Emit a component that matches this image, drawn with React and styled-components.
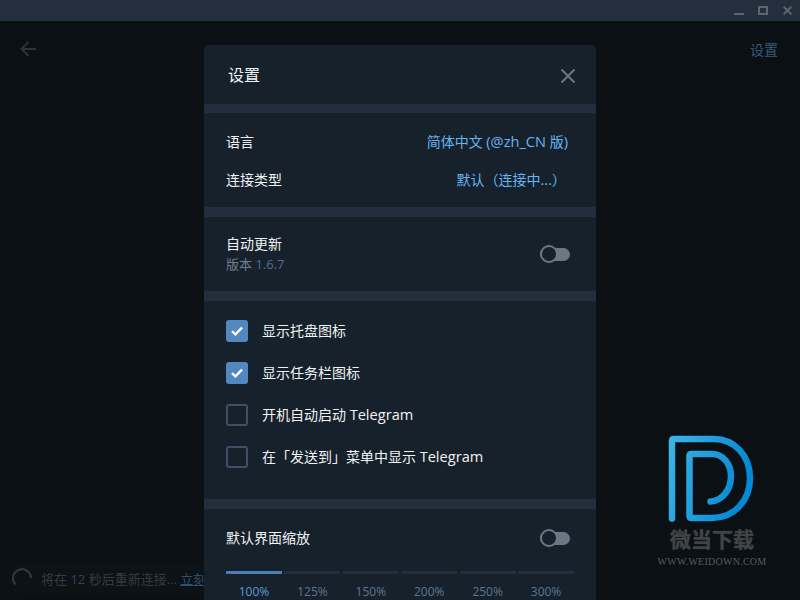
import styled, { createGlobalStyle } from "styled-components";

const GlobalStyle = createGlobalStyle`
  html, body {
    margin: 0;
    padding: 0;
    background: #0b1014;
    font-family: "Open Sans", "Noto Sans CJK SC", sans-serif;
    font-size: 14px;
  }
  *, *::before { box-sizing: border-box; }
`;

const scales = ["100%", "125%", "150%", "200%", "250%", "300%"];

const CHECKS = [
  { label: "显示托盘图标", on: true },
  { label: "显示任务栏图标", on: true },
  { label: "开机自动启动", latin: "Telegram", on: false },
  { label: "在「发送到」菜单中显示", latin: "Telegram", on: false },
];

export default function App() {
  return (
    <Page>
      <GlobalStyle />
      <TitleBar>
        <WinIcon viewBox="0 0 12 12">
          <path d="M1 9H11" stroke="#5a6672" strokeWidth="2" />
        </WinIcon>
        <WinIcon viewBox="0 0 12 12">
          <rect x="2" y="2" width="8" height="7" fill="none" stroke="#5a6672" strokeWidth="2" />
        </WinIcon>
        <WinIcon viewBox="0 0 12 12">
          <path d="M2.7 1.7L10.3 9.3M10.3 1.7L2.7 9.3" fill="none" stroke="#5a6672" strokeWidth="2" />
        </WinIcon>
      </TitleBar>

      <Backdrop>
        <TopRow>
          <BackIcon viewBox="0 0 16 16">
            <path d="M16 8H1.5M8.5 1L1.5 8L8.5 15" fill="none" stroke="#2c3238" strokeWidth="2" />
          </BackIcon>
          <BackTitle>设置</BackTitle>
        </TopRow>

        <Reconnect>
          <Spinner viewBox="0 0 20 20">
            <path d="M3.5 16.5A9 9 0 1 1 19 10" fill="none" stroke="#30373d" strokeWidth="2.2" />
          </Spinner>
          <span>
            将在 <Dim>12</Dim> 秒后重新连接... <NowLink>立刻</NowLink>
          </span>
        </Reconnect>

        <Modal>
          <ModalHead>
            <ModalTitle>设置</ModalTitle>
            <CloseIcon viewBox="0 0 16 16">
              <path d="M1.5 1.5L14.5 14.5M14.5 1.5L1.5 14.5" fill="none" stroke="#6b7680" strokeWidth="2" />
            </CloseIcon>
          </ModalHead>

          <Divider $h={9} />
          <LinkSection>
            <LinkRow>
              <RowText>语言</RowText>
              <LinkValue>简体中文 <Latin>(@zh_CN</Latin> 版<Latin>)</Latin></LinkValue>
            </LinkRow>
            <LinkRow>
              <RowText>连接类型</RowText>
              <LinkValue $pull={2}>默认（连接中<Latin>...</Latin>）</LinkValue>
            </LinkRow>
          </LinkSection>

          <Divider $h={10} />
          <UpdateSection>
            <div>
              <Label>自动更新</Label>
              <Version>版本 <VersionNum>1.6.7</VersionNum></Version>
            </div>
            <Toggle />
          </UpdateSection>

          <Divider $h={10} />
          <CheckSection>
            {CHECKS.map((c) => (
              <CheckRow key={c.label}>
                <CheckBox $on={c.on}>
                  {c.on && (
                    <svg width="12" height="10" viewBox="0 0 12 10">
                      <path d="M1 5.2L4.4 8.4L11 1.6" fill="none" stroke="#fff" strokeWidth="2.3" />
                    </svg>
                  )}
                </CheckBox>
                <RowText>
                  {c.label}
                  {c.latin && <> <Latin>{c.latin}</Latin></>}
                </RowText>
              </CheckRow>
            ))}
          </CheckSection>

          <Divider $h={10} />
          <ScaleSection>
            <ScaleHead>
              <Label>默认界面缩放</Label>
              <Toggle />
            </ScaleHead>
            <Slider>
              {scales.map((s, i) => (
                <SliderStop key={s}>
                  <Segment $active={i === 0} />
                  <StopLabel $active={i === 0}>{s}</StopLabel>
                </SliderStop>
              ))}
            </Slider>
          </ScaleSection>
        </Modal>

        <Watermark>
          <svg width="95" height="95" viewBox="665 430 95 95">
            <defs>
              <linearGradient id="wd" x1="0" y1="0" x2="1" y2="0.3">
                <stop offset="0" stopColor="#3db2e4" />
                <stop offset="1" stopColor="#0589d4" />
              </linearGradient>
            </defs>
            <path
              d="M672 518.5V441Q672 439 674 439H714C734 439 750 455 750 478C750 501 734 518 712 518H691.5Q689.5 518 689.5 516V456Q689.5 454 691.5 454H712C723 454 731 464 731 476C731 490 722 501 710.5 501.5"
              fill="none"
              stroke="url(#wd)"
              strokeWidth="6.5"
              strokeLinecap="round"
            />
          </svg>
          <MarkName>微当下载</MarkName>
          <MarkUrl>WWW.WEIDOWN.COM</MarkUrl>
        </Watermark>
      </Backdrop>
    </Page>
  );
}

const Page = styled.div`
  width: 800px;
  height: 600px;
  overflow: hidden;
  display: flex;
  flex-direction: column;
`;

const TitleBar = styled.div`
  height: 21px;
  flex: none;
  background: #242f3d;
  display: flex;
  justify-content: flex-end;
  align-items: center;
  gap: 12px;
  padding-right: 7px;
`;

const WinIcon = styled.svg`
  width: 12px;
  height: 12px;
  margin-top: 1px;
`;

const Backdrop = styled.div`
  position: relative;
  flex: 1;
  background: #0b1014;
`;

const TopRow = styled.div`
  display: flex;
  justify-content: space-between;
  align-items: center;
  height: 56px;
  padding: 0 22px 0 20px;
`;

const BackIcon = styled.svg`
  width: 16px;
  height: 16px;
`;

const BackTitle = styled.span`
  font-size: 14px;
  color: #355a7c;
  margin-bottom: 1px;
`;

const Reconnect = styled.div`
  position: absolute;
  left: 7px;
  bottom: 6px;
  width: 230px;
  height: 32px;
  padding-left: 5px;
  border-radius: 16px;
  background: #0d1216;
  display: flex;
  align-items: center;
  gap: 9px;
  color: #343c44;
  font-size: 13px;
  white-space: nowrap;
`;

const Spinner = styled.svg`
  width: 20px;
  height: 20px;
`;

const Dim = styled.span`
  color: #2b4662;
`;

const NowLink = styled.span`
  color: #30506f;
  text-decoration: underline;
`;

const Modal = styled.div`
  position: absolute;
  left: 204px;
  top: 24px;
  width: 392px;
  height: 560px;
  background: #17212b;
  border-radius: 4px 4px 0 0;
  color: #f0f3f5;
  font-size: 14px;
`;

const ModalHead = styled.div`
  height: 59px;
  display: flex;
  align-items: center;
  justify-content: space-between;
  padding: 0 20px 0 24px;
`;

const ModalTitle = styled.span`
  font-size: 16px;
  margin-bottom: 2px;
`;

const CloseIcon = styled.svg`
  width: 16px;
  height: 16px;
  margin-top: 2px;
`;

const Divider = styled.div`
  height: ${(p) => p.$h}px;
  background: #232e3c;
`;

const LinkSection = styled.div`
  padding: 10px 28px 8px 22px;
`;

const LinkRow = styled.div`
  height: 38px;
  display: flex;
  align-items: center;
  justify-content: space-between;
`;

const RowText = styled.span`
  margin-bottom: 2px;
`;

const Latin = styled.span`
  font-size: 14.6px;
`;

const LinkValue = styled.span`
  color: #64b5f6;
  margin-bottom: 2px;
  margin-right: ${(p) => p.$pull || 0}px;
`;

const UpdateSection = styled.div`
  height: 74px;
  display: flex;
  align-items: center;
  justify-content: space-between;
  padding: 0 26px 0 22px;
`;

const Label = styled.div`
  line-height: 20px;
`;

const Version = styled.div`
  font-size: 13px;
  line-height: 20px;
  color: #6d7f8f;
`;

const VersionNum = styled.span`
  color: #4a6f94;
`;

const Toggle = styled.div`
  position: relative;
  width: 30px;
  height: 13px;
  border-radius: 7px;
  background: #6b7884;

  &::before {
    content: "";
    position: absolute;
    left: 0;
    top: -3px;
    width: 18px;
    height: 18px;
    border-radius: 50%;
    border: 2px solid #6b7884;
    background: #17212b;
  }
`;

const CheckSection = styled.div`
  padding: 9px 22px 21px;
`;

const CheckRow = styled.div`
  height: 42px;
  display: flex;
  align-items: center;
  gap: 14px;
`;

const CheckBox = styled.div`
  width: 22px;
  height: 22px;
  flex: none;
  border-radius: 3px;
  display: flex;
  align-items: center;
  justify-content: center;
  background: ${(p) => (p.$on ? "#5288c1" : "transparent")};
  border: ${(p) => (p.$on ? "none" : "2px solid #3f5066")};
`;

const ScaleSection = styled.div`
  padding: 19px 26px 0 22px;
`;

const ScaleHead = styled.div`
  display: flex;
  align-items: center;
  justify-content: space-between;
  height: 20px;
  margin-bottom: 23px;
`;

const Slider = styled.div`
  display: flex;
  gap: 2.4px;
  width: 348px;
`;

const SliderStop = styled.div`
  flex: 1;
  display: flex;
  flex-direction: column;
  align-items: center;
`;

const Segment = styled.div`
  width: 100%;
  height: 3px;
  background: ${(p) => (p.$active ? "#4a7fb5" : "#232e3c")};
`;

const StopLabel = styled.span`
  margin-top: 9px;
  font-size: 12px;
  line-height: 18px;
  color: ${(p) => (p.$active ? "#5a9bd8" : "#5d7690")};
`;

const Watermark = styled.div`
  position: absolute;
  left: 652px;
  top: 409px;
  width: 120px;
  display: flex;
  flex-direction: column;
  align-items: center;
`;

const MarkName = styled.div`
  margin-top: 2px;
  font-size: 21px;
  line-height: 25px;
  font-weight: 700;
  color: #404346;
  text-shadow: 0 0 1px #404346;
`;

const MarkUrl = styled.div`
  margin-top: 4px;
  font-family: "Liberation Serif", serif;
  font-size: 10px;
  line-height: 12px;
  color: #5a5c5e;
  white-space: nowrap;
  letter-spacing: 0.25px;
`;
